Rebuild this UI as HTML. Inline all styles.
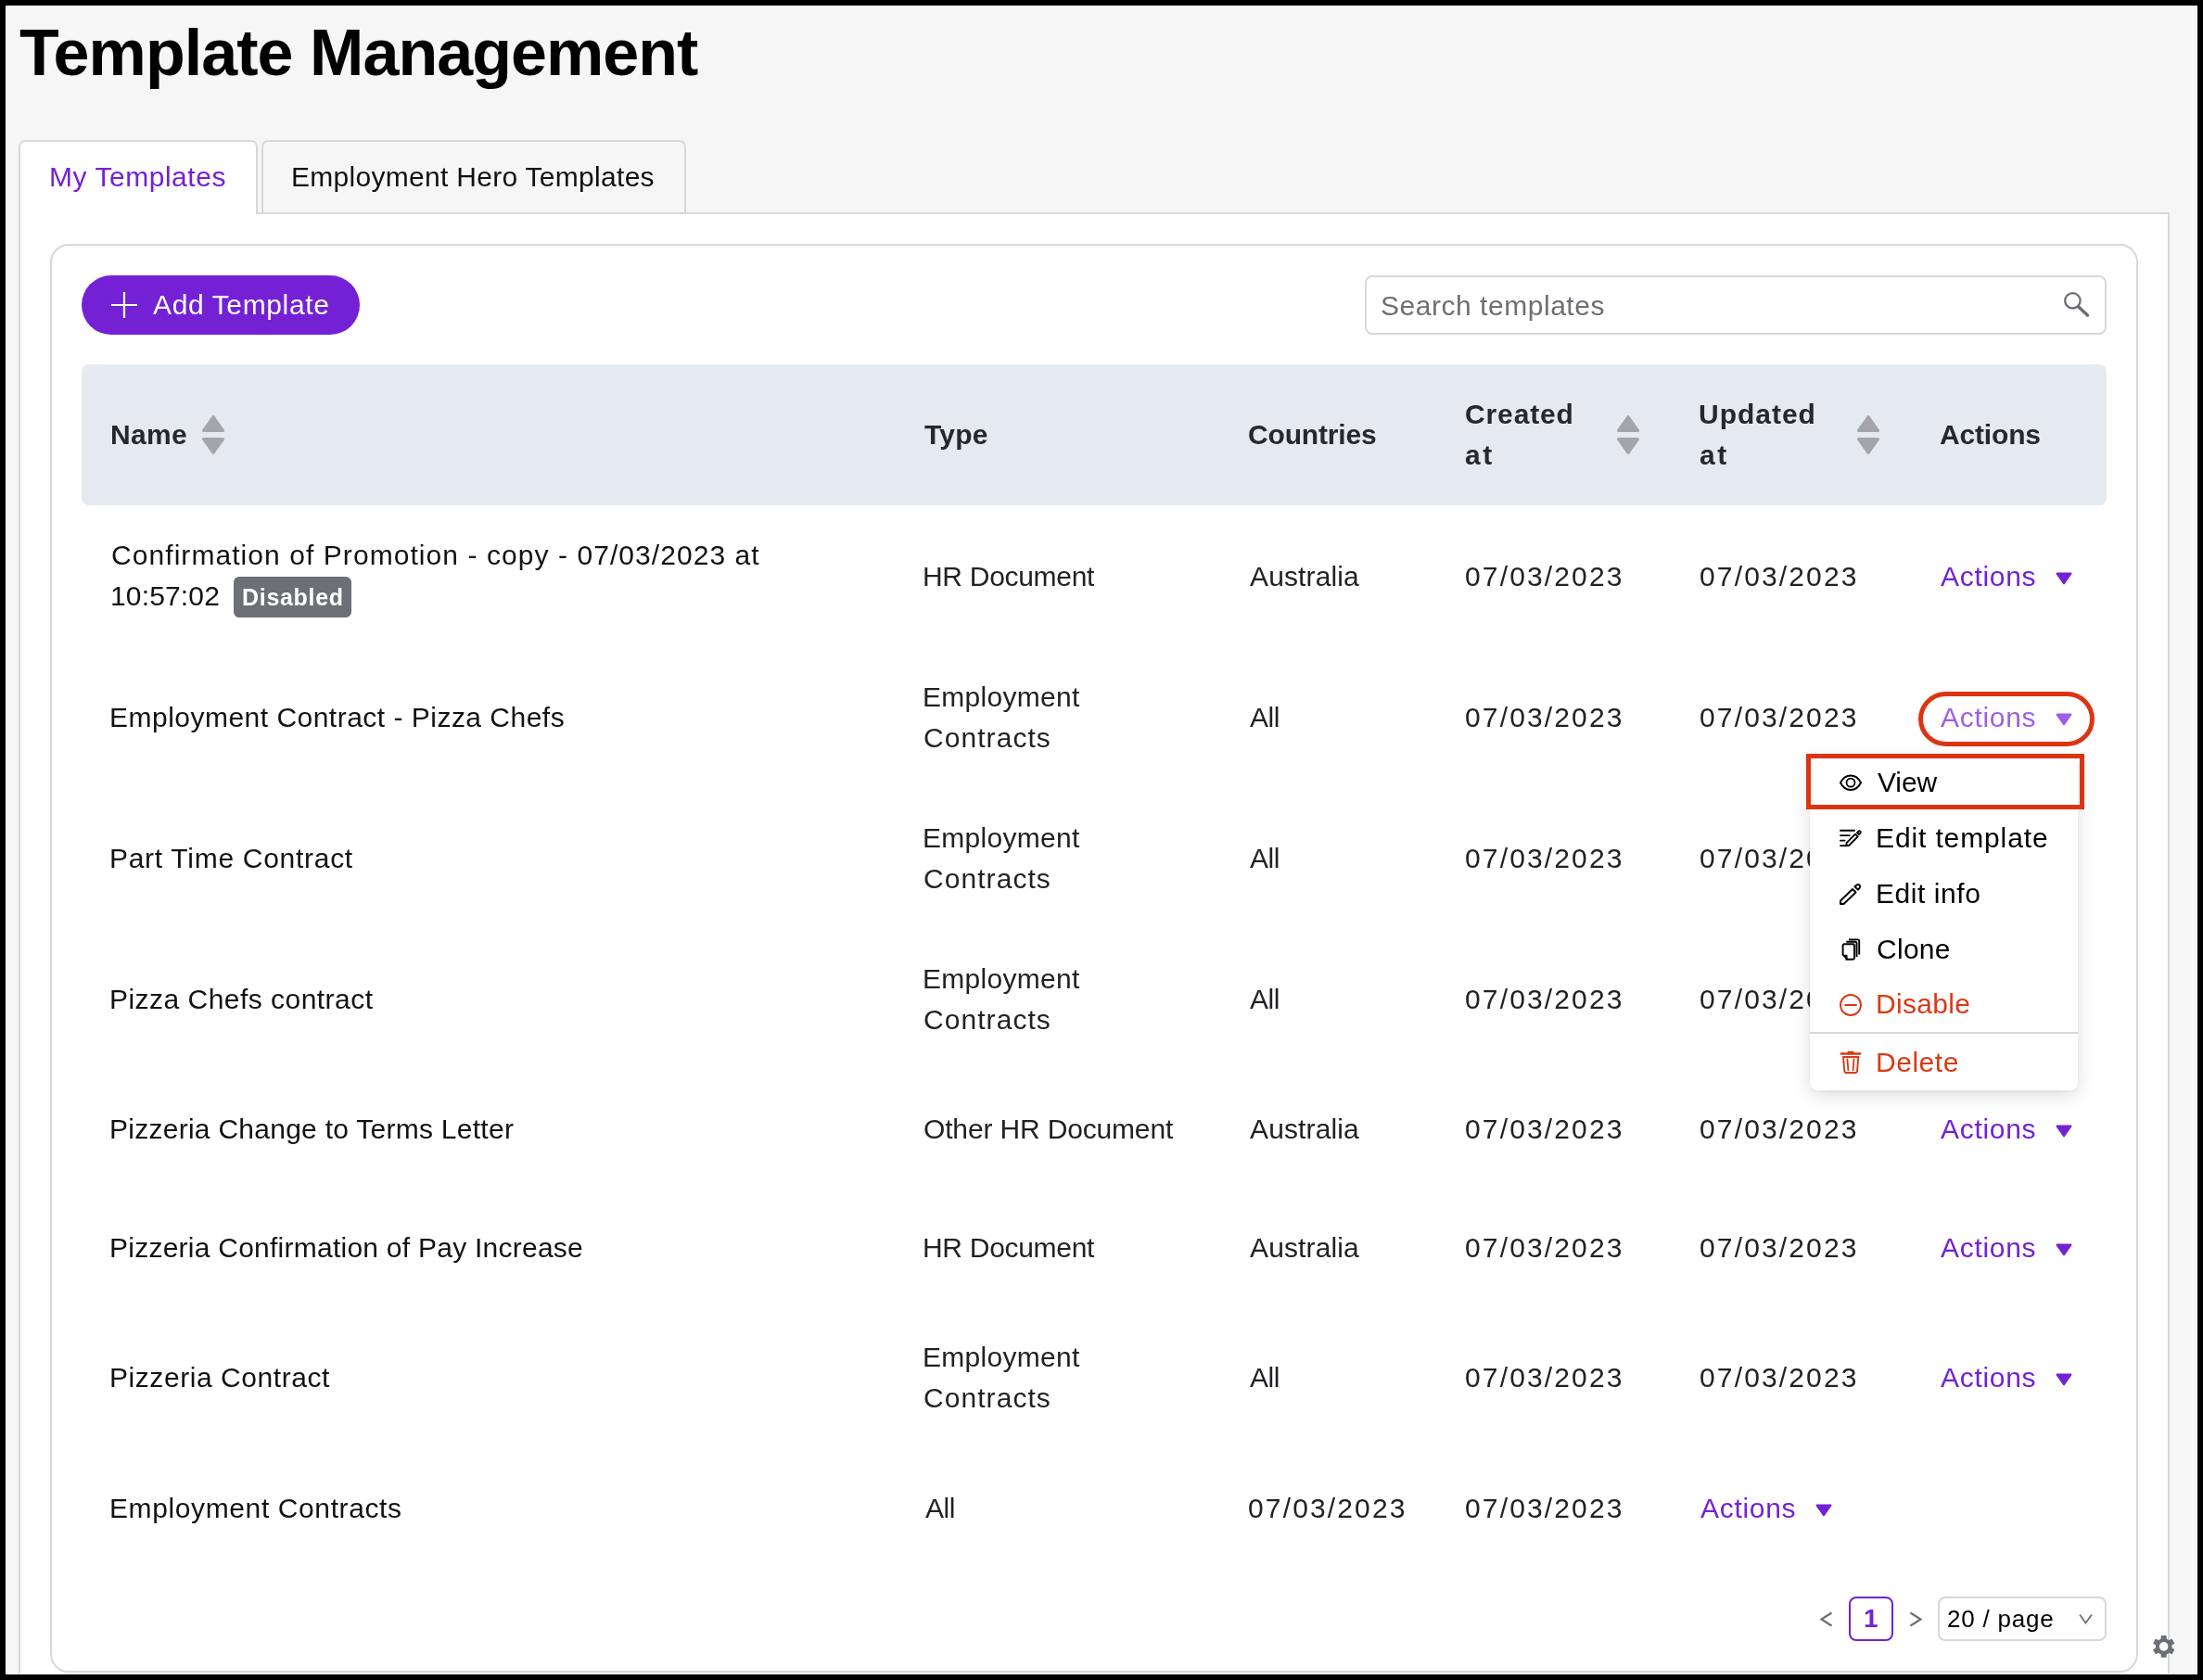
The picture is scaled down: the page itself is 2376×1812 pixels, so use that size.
<!DOCTYPE html>
<html><head><meta charset="utf-8"><title>Template Management</title>
<style>
html,body{margin:0;padding:0;}
body{width:2376px;height:1812px;background:#000;position:relative;overflow:hidden;font-family:"Liberation Sans", sans-serif;}
.t{position:absolute;white-space:nowrap;-webkit-font-smoothing:antialiased;will-change:transform;}
svg{display:block;}
</style></head><body>
<div style="position:absolute;left:6px;top:6px;width:2364px;height:1800px;box-sizing:border-box;background:#f6f6f6;border:1px solid #fff;"></div>
<div class="t" style="left:21.0px;top:21.7px;font-size:70px;line-height:70px;font-weight:700;color:#000;letter-spacing:-0.944px;">Template Management</div>
<div style="position:absolute;left:20px;top:229px;width:2320px;height:1671px;box-sizing:border-box;background:#fff;border:2px solid #d7d8dd;"></div>
<div style="position:absolute;left:282px;top:151px;width:458px;height:78px;box-sizing:border-box;background:#f6f6f6;border:2px solid #d7d8dd;border-bottom:none;border-radius:7px 7px 0 0;"></div>
<div style="position:absolute;left:20px;top:151px;width:258px;height:80px;box-sizing:border-box;background:#fff;border:2px solid #d7d8dd;border-bottom:none;border-radius:7px 7px 0 0;"></div>
<div class="t" style="left:52.5px;top:176.0px;font-size:30px;line-height:30px;font-weight:400;color:#7421d6;letter-spacing:0.536px;">My Templates</div>
<div class="t" style="left:314.0px;top:176.0px;font-size:30px;line-height:30px;font-weight:400;color:#111;letter-spacing:0.292px;">Employment Hero Templates</div>
<div style="position:absolute;left:54px;top:263px;width:2252px;height:1541px;box-sizing:border-box;background:#fff;border:2px solid #d7d8dd;border-radius:20px;"></div>
<div style="position:absolute;left:88px;top:297px;width:300px;height:64px;box-sizing:border-box;background:#7421d6;border-radius:32px;"></div>
<svg style="position:absolute;left:120px;top:315px" width="28" height="28" viewBox="0 0 28 28"><path d="M14 0V28M0 14H28" stroke="#fff" stroke-width="2.2"/></svg>
<div class="t" style="left:165.0px;top:314.1px;font-size:30px;line-height:30px;font-weight:400;color:#fff;letter-spacing:0.636px;">Add Template</div>
<div style="position:absolute;left:1472px;top:297px;width:800px;height:64px;box-sizing:border-box;background:#fff;border:2px solid #d7d8dd;border-radius:8px;"></div>
<div class="t" style="left:1489.0px;top:315.3px;font-size:30px;line-height:30px;font-weight:400;color:#6d6f76;letter-spacing:0.533px;">Search templates</div>
<svg style="position:absolute;left:2220px;top:310px" width="40" height="40" viewBox="0 0 40 40"><circle cx="15.4" cy="14.3" r="8.2" fill="none" stroke="#6d6f76" stroke-width="2.3"/><path d="M21.5 20.8L31.5 30" stroke="#6d6f76" stroke-width="3.6" stroke-linecap="round"/></svg>
<div style="position:absolute;left:88px;top:393px;width:2184px;height:152px;box-sizing:border-box;background:#e5e9f0;border-radius:8px;"></div>
<div class="t" style="left:118.8px;top:454.3px;font-size:30px;line-height:30px;font-weight:700;color:#27282c;letter-spacing:0.300px;">Name</div>
<svg style="position:absolute;left:218px;top:448px" width="25" height="43" viewBox="0 0 25 43"><path d="M12 1.6 L22.4 16.4 H1.6 Z" fill="#a4a5ab" stroke="#a4a5ab" stroke-width="3.2" stroke-linejoin="round"/><path d="M1.6 25.6 H22.4 L12 40.2 Z" fill="#a4a5ab" stroke="#a4a5ab" stroke-width="3.2" stroke-linejoin="round"/></svg>
<div class="t" style="left:997.2px;top:454.3px;font-size:30px;line-height:30px;font-weight:700;color:#27282c;letter-spacing:0.233px;">Type</div>
<div class="t" style="left:1346.0px;top:454.3px;font-size:30px;line-height:30px;font-weight:700;color:#27282c;letter-spacing:-0.162px;">Countries</div>
<div class="t" style="left:1579.8px;top:432.3px;font-size:30px;line-height:30px;font-weight:700;color:#27282c;letter-spacing:0.867px;">Created</div>
<div class="t" style="left:1579.8px;top:476.1px;font-size:30px;line-height:30px;font-weight:700;color:#27282c;letter-spacing:2.600px;">at</div>
<svg style="position:absolute;left:1744px;top:448px" width="25" height="43" viewBox="0 0 25 43"><path d="M12 1.6 L22.4 16.4 H1.6 Z" fill="#a4a5ab" stroke="#a4a5ab" stroke-width="3.2" stroke-linejoin="round"/><path d="M1.6 25.6 H22.4 L12 40.2 Z" fill="#a4a5ab" stroke="#a4a5ab" stroke-width="3.2" stroke-linejoin="round"/></svg>
<div class="t" style="left:1831.8px;top:432.3px;font-size:30px;line-height:30px;font-weight:700;color:#27282c;letter-spacing:0.983px;">Updated</div>
<div class="t" style="left:1832.8px;top:476.1px;font-size:30px;line-height:30px;font-weight:700;color:#27282c;letter-spacing:2.600px;">at</div>
<svg style="position:absolute;left:2003px;top:448px" width="25" height="43" viewBox="0 0 25 43"><path d="M12 1.6 L22.4 16.4 H1.6 Z" fill="#a4a5ab" stroke="#a4a5ab" stroke-width="3.2" stroke-linejoin="round"/><path d="M1.6 25.6 H22.4 L12 40.2 Z" fill="#a4a5ab" stroke="#a4a5ab" stroke-width="3.2" stroke-linejoin="round"/></svg>
<div class="t" style="left:2092.0px;top:454.3px;font-size:30px;line-height:30px;font-weight:700;color:#27282c;letter-spacing:-0.167px;">Actions</div>
<div class="t" style="left:119.6px;top:583.7px;font-size:30px;line-height:30px;font-weight:400;color:#111214;letter-spacing:1.064px;">Confirmation of Promotion - copy - 07/03/2023 at</div>
<div class="t" style="left:118.6px;top:627.7px;font-size:30px;line-height:30px;font-weight:400;color:#111214;letter-spacing:0.157px;">10:57:02</div>
<div style="position:absolute;left:252px;top:622px;width:127px;height:44px;box-sizing:border-box;background:#6d6f76;border-radius:6px;"></div>
<div class="t" style="left:260.6px;top:631.8px;font-size:25px;line-height:25px;font-weight:700;color:#fff;letter-spacing:0.700px;">Disabled</div>
<div class="t" style="left:995.0px;top:606.9px;font-size:30px;line-height:30px;font-weight:400;color:#212226;letter-spacing:-0.300px;">HR Document</div>
<div class="t" style="left:1347.5px;top:606.9px;font-size:30px;line-height:30px;font-weight:400;color:#212226;letter-spacing:0.125px;">Australia</div>
<div class="t" style="left:1579.6px;top:606.9px;font-size:30px;line-height:30px;font-weight:400;color:#212226;letter-spacing:2.144px;">07/03/2023</div>
<div class="t" style="left:1832.6px;top:606.9px;font-size:30px;line-height:30px;font-weight:400;color:#212226;letter-spacing:2.144px;">07/03/2023</div>
<div class="t" style="left:2093.0px;top:606.9px;font-size:30px;line-height:30px;font-weight:400;color:#7421d6;letter-spacing:0.700px;">Actions</div>
<svg style="position:absolute;left:2217px;top:617.2px" width="18" height="14" viewBox="0 0 18 14"><path d="M1.6 1.6H16.4L9 12.2Z" fill="#7421d6" stroke="#7421d6" stroke-width="2.2" stroke-linejoin="round"/></svg>
<div class="t" style="left:118.4px;top:758.7px;font-size:30px;line-height:30px;font-weight:400;color:#111214;letter-spacing:0.484px;">Employment Contract - Pizza Chefs</div>
<div class="t" style="left:995.0px;top:736.9px;font-size:30px;line-height:30px;font-weight:400;color:#212226;letter-spacing:0.278px;">Employment</div>
<div class="t" style="left:996.0px;top:780.9px;font-size:30px;line-height:30px;font-weight:400;color:#212226;letter-spacing:1.062px;">Contracts</div>
<div class="t" style="left:1347.5px;top:758.9px;font-size:30px;line-height:30px;font-weight:400;color:#212226;letter-spacing:-0.400px;">All</div>
<div class="t" style="left:1579.6px;top:758.9px;font-size:30px;line-height:30px;font-weight:400;color:#212226;letter-spacing:2.144px;">07/03/2023</div>
<div class="t" style="left:1832.6px;top:758.9px;font-size:30px;line-height:30px;font-weight:400;color:#212226;letter-spacing:2.144px;">07/03/2023</div>
<div class="t" style="left:2093.0px;top:758.9px;font-size:30px;line-height:30px;font-weight:400;color:#9d5fe5;letter-spacing:0.700px;">Actions</div>
<svg style="position:absolute;left:2217px;top:769.1px" width="18" height="14" viewBox="0 0 18 14"><path d="M1.6 1.6H16.4L9 12.2Z" fill="#9d5fe5" stroke="#9d5fe5" stroke-width="2.2" stroke-linejoin="round"/></svg>
<div class="t" style="left:118.4px;top:910.6px;font-size:30px;line-height:30px;font-weight:400;color:#111214;letter-spacing:0.712px;">Part Time Contract</div>
<div class="t" style="left:995.0px;top:888.6px;font-size:30px;line-height:30px;font-weight:400;color:#212226;letter-spacing:0.278px;">Employment</div>
<div class="t" style="left:996.0px;top:932.6px;font-size:30px;line-height:30px;font-weight:400;color:#212226;letter-spacing:1.062px;">Contracts</div>
<div class="t" style="left:1347.5px;top:910.6px;font-size:30px;line-height:30px;font-weight:400;color:#212226;letter-spacing:-0.400px;">All</div>
<div class="t" style="left:1579.6px;top:910.6px;font-size:30px;line-height:30px;font-weight:400;color:#212226;letter-spacing:2.144px;">07/03/2023</div>
<div class="t" style="left:1832.6px;top:910.6px;font-size:30px;line-height:30px;font-weight:400;color:#212226;letter-spacing:2.144px;">07/03/2023</div>
<div class="t" style="left:118.4px;top:1062.9px;font-size:30px;line-height:30px;font-weight:400;color:#111214;letter-spacing:0.468px;">Pizza Chefs contract</div>
<div class="t" style="left:995.0px;top:1040.6px;font-size:30px;line-height:30px;font-weight:400;color:#212226;letter-spacing:0.278px;">Employment</div>
<div class="t" style="left:996.0px;top:1084.6px;font-size:30px;line-height:30px;font-weight:400;color:#212226;letter-spacing:1.062px;">Contracts</div>
<div class="t" style="left:1347.5px;top:1062.6px;font-size:30px;line-height:30px;font-weight:400;color:#212226;letter-spacing:-0.400px;">All</div>
<div class="t" style="left:1579.6px;top:1062.6px;font-size:30px;line-height:30px;font-weight:400;color:#212226;letter-spacing:2.144px;">07/03/2023</div>
<div class="t" style="left:1832.6px;top:1062.6px;font-size:30px;line-height:30px;font-weight:400;color:#212226;letter-spacing:2.144px;">07/03/2023</div>
<div class="t" style="left:118.4px;top:1203.2px;font-size:30px;line-height:30px;font-weight:400;color:#111214;letter-spacing:0.263px;">Pizzeria Change to Terms Letter</div>
<div class="t" style="left:996.0px;top:1203.1px;font-size:30px;line-height:30px;font-weight:400;color:#212226;letter-spacing:-0.156px;">Other HR Document</div>
<div class="t" style="left:1347.5px;top:1203.1px;font-size:30px;line-height:30px;font-weight:400;color:#212226;letter-spacing:0.125px;">Australia</div>
<div class="t" style="left:1579.6px;top:1203.1px;font-size:30px;line-height:30px;font-weight:400;color:#212226;letter-spacing:2.144px;">07/03/2023</div>
<div class="t" style="left:1832.6px;top:1203.1px;font-size:30px;line-height:30px;font-weight:400;color:#212226;letter-spacing:2.144px;">07/03/2023</div>
<div class="t" style="left:2093.0px;top:1203.1px;font-size:30px;line-height:30px;font-weight:400;color:#7421d6;letter-spacing:0.700px;">Actions</div>
<svg style="position:absolute;left:2217px;top:1213.4px" width="18" height="14" viewBox="0 0 18 14"><path d="M1.6 1.6H16.4L9 12.2Z" fill="#7421d6" stroke="#7421d6" stroke-width="2.2" stroke-linejoin="round"/></svg>
<div class="t" style="left:118.4px;top:1330.9px;font-size:30px;line-height:30px;font-weight:400;color:#111214;letter-spacing:0.247px;">Pizzeria Confirmation of Pay Increase</div>
<div class="t" style="left:995.0px;top:1331.1px;font-size:30px;line-height:30px;font-weight:400;color:#212226;letter-spacing:-0.300px;">HR Document</div>
<div class="t" style="left:1347.5px;top:1331.1px;font-size:30px;line-height:30px;font-weight:400;color:#212226;letter-spacing:0.125px;">Australia</div>
<div class="t" style="left:1579.6px;top:1331.1px;font-size:30px;line-height:30px;font-weight:400;color:#212226;letter-spacing:2.144px;">07/03/2023</div>
<div class="t" style="left:1832.6px;top:1331.1px;font-size:30px;line-height:30px;font-weight:400;color:#212226;letter-spacing:2.144px;">07/03/2023</div>
<div class="t" style="left:2093.0px;top:1331.1px;font-size:30px;line-height:30px;font-weight:400;color:#7421d6;letter-spacing:0.700px;">Actions</div>
<svg style="position:absolute;left:2217px;top:1341.4px" width="18" height="14" viewBox="0 0 18 14"><path d="M1.6 1.6H16.4L9 12.2Z" fill="#7421d6" stroke="#7421d6" stroke-width="2.2" stroke-linejoin="round"/></svg>
<div class="t" style="left:118.4px;top:1471.3px;font-size:30px;line-height:30px;font-weight:400;color:#111214;letter-spacing:0.562px;">Pizzeria Contract</div>
<div class="t" style="left:995.0px;top:1448.9px;font-size:30px;line-height:30px;font-weight:400;color:#212226;letter-spacing:0.278px;">Employment</div>
<div class="t" style="left:996.0px;top:1492.9px;font-size:30px;line-height:30px;font-weight:400;color:#212226;letter-spacing:1.062px;">Contracts</div>
<div class="t" style="left:1347.5px;top:1470.9px;font-size:30px;line-height:30px;font-weight:400;color:#212226;letter-spacing:-0.400px;">All</div>
<div class="t" style="left:1579.6px;top:1470.9px;font-size:30px;line-height:30px;font-weight:400;color:#212226;letter-spacing:2.144px;">07/03/2023</div>
<div class="t" style="left:1832.6px;top:1470.9px;font-size:30px;line-height:30px;font-weight:400;color:#212226;letter-spacing:2.144px;">07/03/2023</div>
<div class="t" style="left:2093.0px;top:1470.9px;font-size:30px;line-height:30px;font-weight:400;color:#7421d6;letter-spacing:0.700px;">Actions</div>
<svg style="position:absolute;left:2217px;top:1481.2px" width="18" height="14" viewBox="0 0 18 14"><path d="M1.6 1.6H16.4L9 12.2Z" fill="#7421d6" stroke="#7421d6" stroke-width="2.2" stroke-linejoin="round"/></svg>
<div class="t" style="left:118.2px;top:1611.6px;font-size:30px;line-height:30px;font-weight:400;color:#111214;letter-spacing:0.611px;">Employment Contracts</div>
<div class="t" style="left:997.5px;top:1611.6px;font-size:30px;line-height:30px;font-weight:400;color:#212226;letter-spacing:-0.400px;">All</div>
<div class="t" style="left:1346.0px;top:1611.6px;font-size:30px;line-height:30px;font-weight:400;color:#212226;letter-spacing:2.144px;">07/03/2023</div>
<div class="t" style="left:1580.0px;top:1611.6px;font-size:30px;line-height:30px;font-weight:400;color:#212226;letter-spacing:2.144px;">07/03/2023</div>
<div class="t" style="left:1833.8px;top:1611.6px;font-size:30px;line-height:30px;font-weight:400;color:#7421d6;letter-spacing:0.700px;">Actions</div>
<svg style="position:absolute;left:1957.8px;top:1621.9px" width="18" height="14" viewBox="0 0 18 14"><path d="M1.6 1.6H16.4L9 12.2Z" fill="#7421d6" stroke="#7421d6" stroke-width="2.2" stroke-linejoin="round"/></svg>
<svg style="position:absolute;left:1960px;top:1735px" width="20" height="22" viewBox="0 0 20 22"><path d="M15.5 4.5L4.5 11.5L15.5 18.5" fill="none" stroke="#6d6f76" stroke-width="2.2"/></svg>
<div style="position:absolute;left:1994px;top:1722px;width:48px;height:48px;box-sizing:border-box;border:2px solid #7421d6;border-radius:8px;"></div>
<div class="t" style="left:2010.0px;top:1732.2px;font-size:28px;line-height:28px;font-weight:700;color:#7421d6;">1</div>
<svg style="position:absolute;left:2056px;top:1735px" width="20" height="22" viewBox="0 0 20 22"><path d="M4.5 4.5L15.5 11.5L4.5 18.5" fill="none" stroke="#6d6f76" stroke-width="2.2"/></svg>
<div style="position:absolute;left:2090px;top:1722px;width:182px;height:48px;box-sizing:border-box;border:2px solid #d7d8dd;border-radius:8px;"></div>
<div class="t" style="left:2099.8px;top:1733.0px;font-size:26px;line-height:26px;font-weight:400;color:#000;letter-spacing:0.775px;">20 / page</div>
<svg style="position:absolute;left:2240px;top:1738px" width="20" height="16" viewBox="0 0 20 16"><path d="M3 3.5L9.5 12.5L16 3.5" fill="none" stroke="#6d6f76" stroke-width="1.8"/></svg>
<svg style="position:absolute;left:2316px;top:1758px" width="36" height="36" viewBox="0 0 36 36"><defs><mask id="gm"><rect x="0" y="0" width="36" height="36" fill="#fff"/><circle cx="17.7" cy="17.9" r="4.8" fill="#000"/></mask></defs><g mask="url(#gm)" fill="#6d6f76"><g transform="translate(17.7 17.9)"><circle r="8.9"/><rect x="-3" y="-11.8" width="6" height="6" rx="0.8" transform="rotate(0)"/><rect x="-3" y="-11.8" width="6" height="6" rx="0.8" transform="rotate(60)"/><rect x="-3" y="-11.8" width="6" height="6" rx="0.8" transform="rotate(120)"/><rect x="-3" y="-11.8" width="6" height="6" rx="0.8" transform="rotate(180)"/><rect x="-3" y="-11.8" width="6" height="6" rx="0.8" transform="rotate(240)"/><rect x="-3" y="-11.8" width="6" height="6" rx="0.8" transform="rotate(300)"/></g></g></svg>
<div style="position:absolute;left:2069px;top:746px;width:190px;height:59px;box-sizing:border-box;border:5px solid #dc3412;border-radius:30px;"></div>
<div style="position:absolute;left:1952px;top:814px;width:289px;height:362px;box-sizing:border-box;background:#fff;border-radius:8px;box-shadow:0 6px 20px rgba(0,0,0,0.13),0 1px 4px rgba(0,0,0,0.06);"></div>
<div class="t" style="left:2025.3px;top:829.1px;font-size:30px;line-height:30px;font-weight:400;color:#000;letter-spacing:-0.100px;">View</div>
<div class="t" style="left:2023.3px;top:889.1px;font-size:30px;line-height:30px;font-weight:400;color:#000;letter-spacing:0.875px;">Edit template</div>
<div class="t" style="left:2023.3px;top:949.1px;font-size:30px;line-height:30px;font-weight:400;color:#000;letter-spacing:0.563px;">Edit info</div>
<div class="t" style="left:2024.3px;top:1008.6px;font-size:30px;line-height:30px;font-weight:400;color:#000;letter-spacing:0.275px;">Clone</div>
<div class="t" style="left:2023.3px;top:1068.1px;font-size:30px;line-height:30px;font-weight:400;color:#d93a14;letter-spacing:0.333px;">Disable</div>
<div class="t" style="left:2023.3px;top:1130.7px;font-size:30px;line-height:30px;font-weight:400;color:#d93a14;letter-spacing:0.520px;">Delete</div>
<div style="position:absolute;left:1952px;top:1113px;width:289px;height:2px;box-sizing:border-box;background:#d7d8dd;"></div>
<svg style="position:absolute;left:1976px;top:826px" width="40" height="40" viewBox="0 0 40 40"><path d="M9 18.2C11.6 13 15.6 10.4 20 10.4C24.4 10.4 28.4 13 31 18.2C28.4 23.4 24.4 25.9 20 25.9C15.6 25.9 11.6 23.4 9 18.2Z" fill="none" stroke="#000" stroke-width="2" stroke-linejoin="round"/><circle cx="20" cy="18.1" r="4.5" fill="none" stroke="#000" stroke-width="1.8"/></svg>
<svg style="position:absolute;left:1976px;top:884px" width="40" height="40" viewBox="0 0 40 40"><path d="M9 11.7H24M9 17.1H18.8M9 22.6H13.6M9 28.1H17.5" stroke="#000" stroke-width="1.9" stroke-linecap="round"/><path d="M15.5 27.8V25.2L25 15.7L27.7 18.4L18.2 27.9Z" fill="none" stroke="#000" stroke-width="1.9" stroke-linejoin="round"/><path d="M27 14.1L28.6 12.5Q29.5 11.8 30.4 12.7Q31.2 13.6 30.5 14.5L28.8 16Z" fill="none" stroke="#000" stroke-width="1.9"/></svg>
<svg style="position:absolute;left:1976px;top:944px" width="40" height="40" viewBox="0 0 40 40"><path d="M9 31V27.5L22 15L25.5 18.5L12.5 31Z" fill="none" stroke="#000" stroke-width="1.9" stroke-linejoin="round"/><path d="M24.5 12.3L26.5 10.5Q28.2 9.3 29.6 10.7Q30.8 12.2 29.6 13.8L27.9 15.6Z" fill="none" stroke="#000" stroke-width="1.9"/></svg>
<svg style="position:absolute;left:1976px;top:1004px" width="40" height="40" viewBox="0 0 40 40"><path d="M18 9.4H27.5Q29.2 9.4 29.2 11.1V25.5M15.3 11.8H24.8Q26.5 11.8 26.5 13.5V28M14.4 30.7H22.5Q24 30.7 24 29.2V15.8Q24 14.3 22.5 14.3H13.2Q11.6 14.3 11.6 15.9V25.8L16.5 30.7" fill="none" stroke="#000" stroke-width="1.9"/><path d="M11.6 25.8H16.5V30.7Z" fill="#000"/></svg>
<svg style="position:absolute;left:1976px;top:1064px" width="40" height="40" viewBox="0 0 40 40"><circle cx="20" cy="20" r="11" fill="none" stroke="#d93a14" stroke-width="1.9"/><path d="M13.4 20H26.8" stroke="#d93a14" stroke-width="2"/></svg>
<svg style="position:absolute;left:1976px;top:1126px" width="40" height="40" viewBox="0 0 40 40"><path d="M9.8 10.5H30.2" stroke="#d93a14" stroke-width="2.4" stroke-linecap="round"/><path d="M16.5 10.5L17.5 8.5H22.5L23.5 10.5Z" fill="#d93a14" stroke="#d93a14" stroke-width="1.5"/><path d="M12 14H28.3L27 29.5Q26.7 31 25.2 31H15.1Q13.6 31 13.3 29.5Z" fill="none" stroke="#d93a14" stroke-width="1.9" stroke-linejoin="round"/><path d="M16.4 16.5L17.4 28.3M23.5 16.5L22.5 28.3" stroke="#d93a14" stroke-width="1.8" stroke-linecap="round"/></svg>
<div style="position:absolute;left:1948px;top:813px;width:300px;height:60px;box-sizing:border-box;border:5px solid #dc3412;"></div>
<div style="position:absolute;left:0;top:0;width:2376px;height:1812px;box-sizing:border-box;border:6px solid #000;pointer-events:none;"><div style="position:absolute;left:0;top:0;right:0;bottom:0;border:1px solid #fff;"></div></div>
</body></html>
